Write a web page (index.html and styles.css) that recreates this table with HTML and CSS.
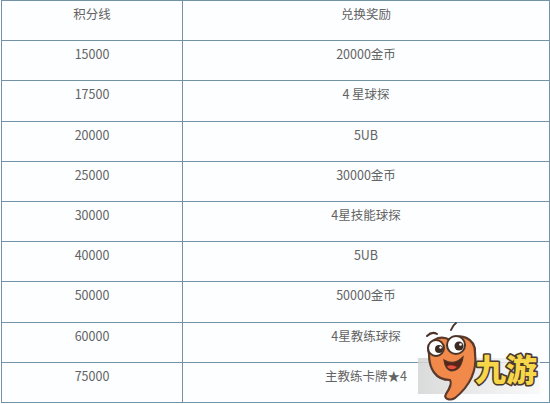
FILE: index.html
```html
<!DOCTYPE html>
<html lang="zh">
<head>
<meta charset="utf-8">
<link rel="stylesheet" href="styles.css">
</head>
<body>
<div class="page">
  <table class="rewards">
    <colgroup><col class="c1"><col class="c2"></colgroup>
    <tr><td>积分线</td><td>兑换奖励</td></tr>
    <tr><td>15000</td><td>20000金币</td></tr>
    <tr><td>17500</td><td>4 星球探</td></tr>
    <tr><td>20000</td><td>5UB</td></tr>
    <tr><td>25000</td><td>30000金币</td></tr>
    <tr><td>30000</td><td>4星技能球探</td></tr>
    <tr><td>40000</td><td>5UB</td></tr>
    <tr><td>50000</td><td>50000金币</td></tr>
    <tr><td>60000</td><td>4星教练球探</td></tr>
    <tr><td>75000</td><td>主教练卡牌★4</td></tr>
  </table>
  <svg class="logo" width="132" height="86" viewBox="0 0 132 86" xmlns="http://www.w3.org/2000/svg">
    <defs>
      <linearGradient id="patch" x1="0" y1="0" x2="1" y2="0">
        <stop offset="0" stop-color="#d4d4d4" stop-opacity="0.85"/>
        <stop offset="0.5" stop-color="#e8e8e8" stop-opacity="0.85"/>
        <stop offset="1" stop-color="#f8f8f8" stop-opacity="0.85"/>
      </linearGradient>
    </defs>
    <rect x="0" y="40" width="122" height="36" fill="url(#patch)"/>
    <path d="M11 36 C7 23 22 16 32 22 C41 14 58 20 57 35 C59 51 53 67 37 80 C32 83 25 81 28 76 C32 70 34 65 32 62 C17 62 11 50 11 36 Z" fill="#f0894a" stroke="#5b3a2c" stroke-width="2.2"/>
    <path d="M9 18 Q14 13 19 16" fill="none" stroke="#4a3428" stroke-width="2" stroke-linecap="round"/>
    <path d="M33 12 Q35 7 38 5" fill="none" stroke="#4a3428" stroke-width="2" stroke-linecap="round"/>
    <circle cx="18" cy="30" r="8" fill="#fff" stroke="#4a3428" stroke-width="2"/>
    <circle cx="38" cy="27" r="9" fill="#fff" stroke="#4a3428" stroke-width="2"/>
    <circle cx="21" cy="31" r="4" fill="#3a2a22"/>
    <circle cx="41" cy="28" r="4.5" fill="#3a2a22"/>
    <circle cx="22.5" cy="29.5" r="1.2" fill="#fff"/>
    <circle cx="42.5" cy="26.5" r="1.3" fill="#fff"/>
    <path d="M26 42 Q36 48 45 39 Q43 53 33 53 Q27 51 26 42 Z" fill="#5a2418" stroke="#4a3428" stroke-width="1.2"/>
    <path d="M29 48 Q34 46 39 49 Q35 53 30 50 Z" fill="#e0503a"/>
    <text x="57" y="63" class="logo-text" fill="#f7d64a" stroke="#4b3b2f" stroke-width="3.2" paint-order="stroke" stroke-linejoin="round">九游</text>
  </svg>
</div>
</body>
</html>
```
FILE: styles.css
```css
html, body {
  margin: 0;
  padding: 0;
  background: #ffffff;
}
.page {
  position: relative;
  width: 550px;
  height: 404px;
  overflow: hidden;
  padding-left: 1px;
  box-sizing: border-box;
}
.rewards {
  border-collapse: collapse;
  width: 548px;
  table-layout: fixed;
  background: #fcfeff;
  font-family: "Noto Sans CJK SC", "Noto Sans", sans-serif;
  font-size: 12.5px;
  color: #636363;
}
.c1 { width: 181px; }
.c2 { width: 367px; }
.rewards tr {
  height: 40.2px;
}
.rewards td {
  border: 1.4px solid #7293a7;
  text-align: center;
  vertical-align: top;
  padding: 3px 0 0 0;
  line-height: 20px;
}
.logo {
  position: absolute;
  left: 418px;
  top: 318px;
}
.logo-text {
  font-family: "Noto Sans CJK SC", sans-serif;
  font-weight: 900;
  font-size: 31px;
}
```
